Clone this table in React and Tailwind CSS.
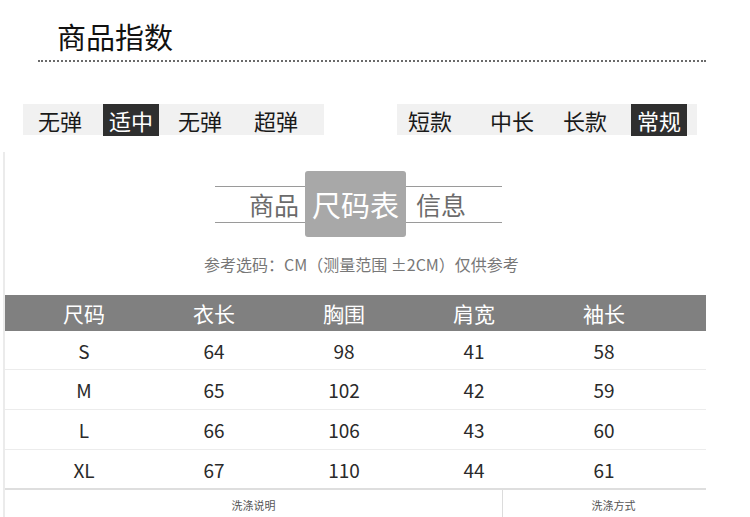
import React from 'react';

const FONT = { fontFamily: '"Noto Sans CJK SC", "Noto Sans", sans-serif' };

// tab groups: [label, left offset inside group, active]
const leftTabs = [
    ['无弹', 'ml-[9px]', false],
    ['适中', 'ml-[15px]', true],
    ['无弹', 'ml-[13px]', false],
    ['超弹', 'ml-[20px]', false],
];
const rightTabs = [
    ['短款', 'ml-[5px]', false],
    ['中长', 'ml-[26px]', false],
    ['长款', 'ml-[17px]', false],
    ['常规', 'ml-[18px]', true],
];

const sizes = [
    ['S', 64, 98, 41, 58],
    ['M', 65, 102, 42, 59],
    ['L', 66, 106, 43, 60],
    ['XL', 67, 110, 44, 61],
];

// row heights follow the picture (first row is a touch shorter)
const rowClass = [
    'h-[39px] border-b border-[#ececec]',
    'h-[40px] border-b border-[#ececec]',
    'h-[40px] border-b border-[#ececec]',
    'h-[40px] border-b-2 border-[#dedede]',
];

const headers = ['尺码', '衣长', '胸围', '肩宽', '袖长'];

const Tab = ({ label, offset, active }) => (
    <div
        className={`${offset} w-[56px] h-[32px] flex items-center justify-center text-[22px] leading-none ${
            active ? 'bg-[#2f2f2f] text-white' : 'text-[#1a1a1a]'
        }`}
    >
        {label}
    </div>
);

const App = () => {
    return (
        <div className="w-[750px] h-[517px] bg-white overflow-hidden flex flex-col" style={FONT}>
            {/* page heading */}
            <div className="mt-[22px] pl-[57px] text-[29px] leading-none text-[#111]">商品指数</div>
            <div className="mt-[9px] ml-[38px] w-[668px] border-t-2 border-dotted border-[#6a6a6a]" />

            {/* index tabs */}
            <div className="mt-[42px] flex items-center">
                <div className="ml-[23px] w-[301px] h-[31px] bg-[#f1f1f1] flex items-center">
                    {leftTabs.map(([label, offset, active], i) => (
                        <Tab key={i} label={label} offset={offset} active={active} />
                    ))}
                </div>
                <div className="ml-[73px] w-[300px] h-[31px] bg-[#f1f1f1] flex items-center">
                    {rightTabs.map(([label, offset, active], i) => (
                        <Tab key={i} label={label} offset={offset} active={active} />
                    ))}
                </div>
            </div>

            {/* size chart */}
            <div className="mt-[17px] ml-[3px] flex-1 border-l-2 border-[#ebebeb] flex flex-col">
                <div className="mt-[19px] ml-[210px] flex items-center">
                    <div className="w-[90px] h-[37px] border-y border-[#9a9a9a] flex items-center justify-end pr-[6px] text-[25px] leading-none text-[#6b6b6b]">
                        商品
                    </div>
                    <div className="w-[101px] h-[66px] rounded-[3px] bg-[#a8a8a8] flex items-center justify-center text-[29px] leading-none text-white">
                        尺码表
                    </div>
                    <div className="w-[96px] h-[37px] border-y border-[#9a9a9a] flex items-center pl-[10px] text-[25px] leading-none text-[#6b6b6b]">
                        信息
                    </div>
                </div>

                <div className="mt-[17px] ml-[199px] text-[16px] leading-[20px] text-[#777]">
                    参考选码：CM（测量范围 ±2CM）仅供参考
                </div>

                <div className="mt-[21px] w-[701px]">
                    <div className="h-[36px] bg-[#808080] pl-[14px] grid grid-cols-[repeat(5,130px)] items-center text-white text-[21px] leading-none">
                        {headers.map((h) => (
                            <div key={h} className="text-center">{h}</div>
                        ))}
                    </div>
                    {sizes.map((row, i) => (
                        <div
                            key={row[0]}
                            className={`${rowClass[i]} pl-[14px] grid grid-cols-[repeat(5,130px)] items-center text-[19px] leading-none text-[#2a2a2a]`}
                        >
                            {row.map((v, j) => (
                                <div key={j} className="text-center">{v}</div>
                            ))}
                        </div>
                    ))}
                    <div className="flex h-[30px] text-[11px] leading-none text-[#555]">
                        <div className="w-[497px] flex items-center justify-center">洗涤说明</div>
                        <div className="flex-1 border-l border-[#dcdcdc] flex items-center justify-center pl-[18px]">洗涤方式</div>
                    </div>
                </div>
            </div>
        </div>
    );
};

export default App;
